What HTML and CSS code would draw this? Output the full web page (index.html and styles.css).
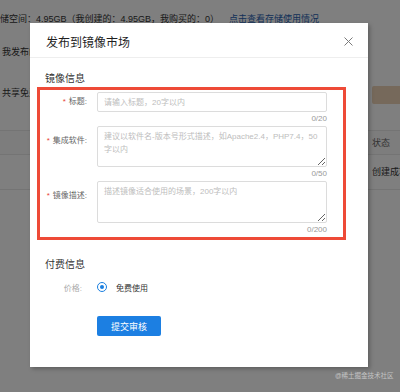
FILE: index.html
```html
<!DOCTYPE html>
<html lang="zh-CN">
	<head>
		<meta charset="UTF-8" />
		<meta name="viewport" content="width=device-width, initial-scale=1.0" />
		<title>发布到镜像市场</title>
		<link rel="stylesheet" href="styles.css">
	</head>
	<body>
		<div class="page">
			<p class="storage">
				储空间：4.95GB（我创建的：4.95GB，我购买的：0）<a class="storage-link">点击查看存储使用情况</a>
			</p>
			<div class="tabs">我发布的镜像</div>
			<p class="tip">共享免费镜像，可在镜像市场中被其他用户使用</p>
			<div class="list">
				<div class="list-row list-head">
					<div class="cell"></div>
					<div class="cell cell-status">状态</div>
				</div>
				<div class="list-row">
					<div class="cell"></div>
					<div class="cell cell-status">创建成功</div>
				</div>
			</div>
			<div class="publish-btn"></div>
		</div>

		<div class="mask"></div>

		<div class="modal">
			<div class="modal-header">
				<div class="modal-title">发布到镜像市场</div>
				<svg class="modal-close" width="9" height="9" viewBox="0 0 9 9">
					<path d="M0.5 0.5 L8.5 8.5 M8.5 0.5 L0.5 8.5" stroke="#7a7a7a" stroke-width="1" fill="none" />
				</svg>
			</div>

			<div class="modal-body">
				<div class="section-title">镜像信息</div>

				<div class="form-box">
					<div class="form-row">
						<label class="form-label"><span class="star">*</span>标题:</label>
						<div class="field">
							<input class="form-input" type="text" placeholder="请输入标题，20字以内" />
							<div class="counter">0/20</div>
						</div>
					</div>
					<div class="form-row">
						<label class="form-label label-area"><span class="star">*</span>集成软件:</label>
						<div class="field">
							<textarea class="form-area" placeholder="建议以软件名-版本号形式描述，如Apache2.4，PHP7.4，50字以内"></textarea>
							<div class="counter">0/50</div>
						</div>
					</div>
					<div class="form-row">
						<label class="form-label label-area"><span class="star">*</span>镜像描述:</label>
						<div class="field">
							<textarea class="form-area area-tall" placeholder="描述镜像适合使用的场景，200字以内"></textarea>
							<div class="counter">0/200</div>
						</div>
					</div>
				</div>

				<div class="section-title pay-title">付费信息</div>
				<div class="price-row">
					<div class="price-label">价格:</div>
					<label class="radio">
						<span class="radio-dot"></span>
						免费使用
					</label>
				</div>

				<button class="submit-btn">提交审核</button>
			</div>
		</div>

		<div class="watermark">@稀土掘金技术社区</div>
	</body>
</html>
```

FILE: styles.css
```css
* {
	margin: 0;
	padding: 0;
	box-sizing: border-box;
}

body {
	font-family: 'Liberation Sans', 'Noto Sans CJK SC', sans-serif;
	background: #fff;
	color: #222;
	width: 400px;
	height: 392px;
	overflow: hidden;
	position: relative;
}

/* page behind the dialog */
.page {
	font-size: 9px;
	line-height: 14px;
	color: #333;
}

.storage {
	margin-top: 12px;
	white-space: nowrap;
}

.storage-link {
	margin-left: 10px;
	color: #1f5fb0;
}

.tabs {
	margin-top: 19px;
	padding-left: 2px;
}

.tip {
	margin-top: 27px;
	padding-left: 2px;
}

.list {
	margin-top: 30px;
}

.list-row {
	display: grid;
	grid-template-columns: 1fr 28px;
	height: 35px;
	align-items: center;
	border-bottom: 1px solid #e8e8e8;
}

.list-head {
	height: 25px;
	background: #fafafa;
	border-top: 1px solid #e8e8e8;
	color: #666;
}

.cell {
	padding-left: 10px;
	white-space: nowrap;
}

.cell-status {
	padding-left: 0;
	overflow: hidden;
}

.publish-btn {
	position: absolute;
	left: 372px;
	top: 86px;
	width: 30px;
	height: 18px;
	background: #ecd3b6;
	border-radius: 2px;
}

.mask {
	position: absolute;
	inset: 0;
	background: rgba(0, 0, 0, 0.5);
}

/* dialog */
.modal {
	position: absolute;
	left: 30px;
	top: 23px;
	width: 338px;
	height: 344px;
	background: #fff;
	box-shadow: 2px 2px 4px rgba(0, 0, 0, 0.25);
}

.modal-header {
	height: 35px;
	display: flex;
	align-items: center;
	justify-content: space-between;
	padding: 3px 15px 0 16px;
	border-bottom: 1px solid #eeeeee;
}

.modal-title {
	font-size: 12px;
	color: #1f1f1f;
}

.modal-close {
	display: block;
}

.modal-body {
	padding: 0 22px 0 7px;
}

.section-title {
	margin: 14px 0 1px 8px;
	font-size: 10px;
	line-height: 14px;
	color: #333;
}

.form-box {
	border: 3px solid #ee4a37;
	padding: 2px 16px 0 0;
}

.form-row {
	display: grid;
	grid-template-columns: 50px 1fr;
	column-gap: 7px;
	margin-bottom: 1px;
}

.form-label {
	font-size: 8px;
	line-height: 20px;
	color: #666;
	text-align: right;
	padding-right: 3px;
	white-space: nowrap;
}

.label-area {
	padding-top: 5px;
}

.star {
	color: #e8413a;
	margin-right: 3px;
}

.form-input,
.form-area {
	display: block;
	width: 100%;
	border: 1px solid #dcdcdc;
	border-radius: 2px;
	font-family: inherit;
	font-size: 8px;
	color: #333;
	outline: none;
	background: #fff;
}

.form-input {
	height: 20px;
	padding: 0 6px;
}

.form-area {
	height: 41px;
	padding: 3px 6px;
	line-height: 13px;
	resize: vertical;
}

.area-tall {
	height: 42px;
}

.form-input::placeholder,
.form-area::placeholder {
	color: #bdbdbd;
}

.counter {
	font-size: 8px;
	line-height: 13px;
	color: #999;
	text-align: right;
}

.pay-title {
	margin-top: 18px;
}

.price-row {
	display: flex;
	align-items: center;
	margin-top: 8px;
	height: 14px;
	padding-left: 3px;
	font-size: 8px;
}

.price-label {
	width: 47px;
	padding-right: 5px;
	text-align: right;
	color: #aaa;
	margin-right: 10px;
	white-space: nowrap;
}

.radio {
	display: flex;
	align-items: center;
	color: #333;
}

.radio-dot {
	width: 10px;
	height: 10px;
	border: 1.5px solid #1a7fe0;
	border-radius: 50%;
	margin-right: 9px;
	display: flex;
	align-items: center;
	justify-content: center;
}

.radio-dot::after {
	content: '';
	width: 4px;
	height: 4px;
	border-radius: 50%;
	background: #1a7fe0;
}

.submit-btn {
	display: block;
	margin: 22px 0 0 60px;
	width: 64px;
	height: 20px;
	background: #1c7fe2;
	color: #fff;
	border: none;
	border-radius: 2px;
	font-family: inherit;
	font-size: 9px;
}

.watermark {
	position: absolute;
	left: 335px;
	top: 371px;
	font-size: 6.5px;
	line-height: 9px;
	color: #c4c4c4;
	white-space: nowrap;
}
```
